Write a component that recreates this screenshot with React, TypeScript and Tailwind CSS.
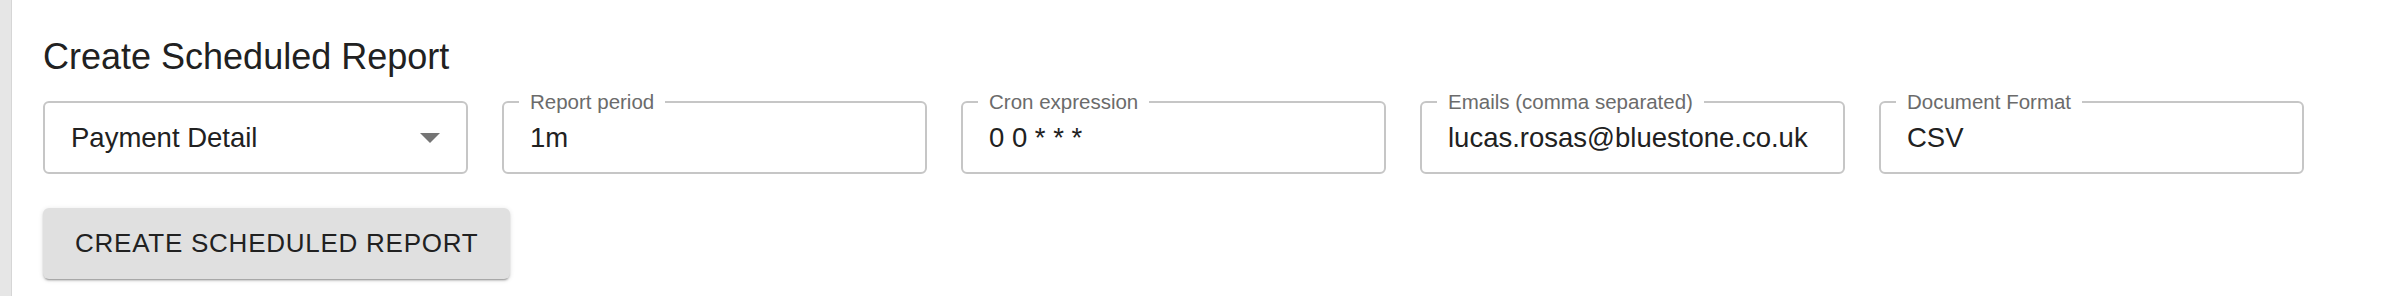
import React from 'react';

interface FieldProps {
  label?: string;
  value: string;
  select?: boolean;
}

const Field: React.FC<FieldProps> = ({ label, value, select }) => {
  return (
    <div className="relative w-[425px] h-[73px] rounded-[6px] border-2 border-[#c6c6c6] bg-white flex items-center px-[26px]">
      {/* notched label */}
      {label && (
        <span className="absolute left-[15px] top-[-14px] bg-white px-[11px] text-[20.5px] leading-[26px] text-[#6b6b6b] whitespace-nowrap">
          {label}
        </span>
      )}
      <span className="flex-1 text-[27.5px] leading-[32px] text-[#212121] whitespace-nowrap overflow-hidden">
        {value}
      </span>
      {select && (
        <svg width="20" height="10" viewBox="0 0 20 10" className="shrink-0 ml-2">
          <path d="M0 0 L20 0 L10 10 Z" fill="#757575" />
        </svg>
      )}
    </div>
  );
};

const FIELDS: FieldProps[] = [
  { value: 'Payment Detail', select: true },
  { label: 'Report period', value: '1m' },
  { label: 'Cron expression', value: '0 0 * * *' },
  { label: 'Emails (comma separated)', value: 'lucas.rosas@bluestone.co.uk' },
  { label: 'Document Format', value: 'CSV' },
];

export default function App() {
  return (
    <div className="flex w-[2384px] h-[296px] bg-white overflow-hidden font-['Liberation_Sans',Arial,sans-serif]">
      {/* side rail */}
      <div className="w-[12px] shrink-0 bg-[#e6e6e6] border-r border-[#d6d6d6]" />

      <div className="flex flex-col pl-[31px] pt-[33px]">
        <h2 className="text-[36px] leading-[48px] text-[#212121] font-normal">
          Create Scheduled Report
        </h2>

        <div className="flex gap-[34px] mt-[20px]">
          {FIELDS.map((f, i) => (
            <Field key={i} {...f} />
          ))}
        </div>

        <div className="mt-[34px]">
          <button className="h-[71px] px-[32px] rounded-[6px] bg-[#e0e0e0] text-[#212121] text-[26px] tracking-[0.75px] uppercase shadow-[0_3px_1px_-2px_rgba(0,0,0,0.2),0_2px_2px_0_rgba(0,0,0,0.14),0_1px_5px_0_rgba(0,0,0,0.12)]">
            Create Scheduled Report
          </button>
        </div>
      </div>
    </div>
  );
}
